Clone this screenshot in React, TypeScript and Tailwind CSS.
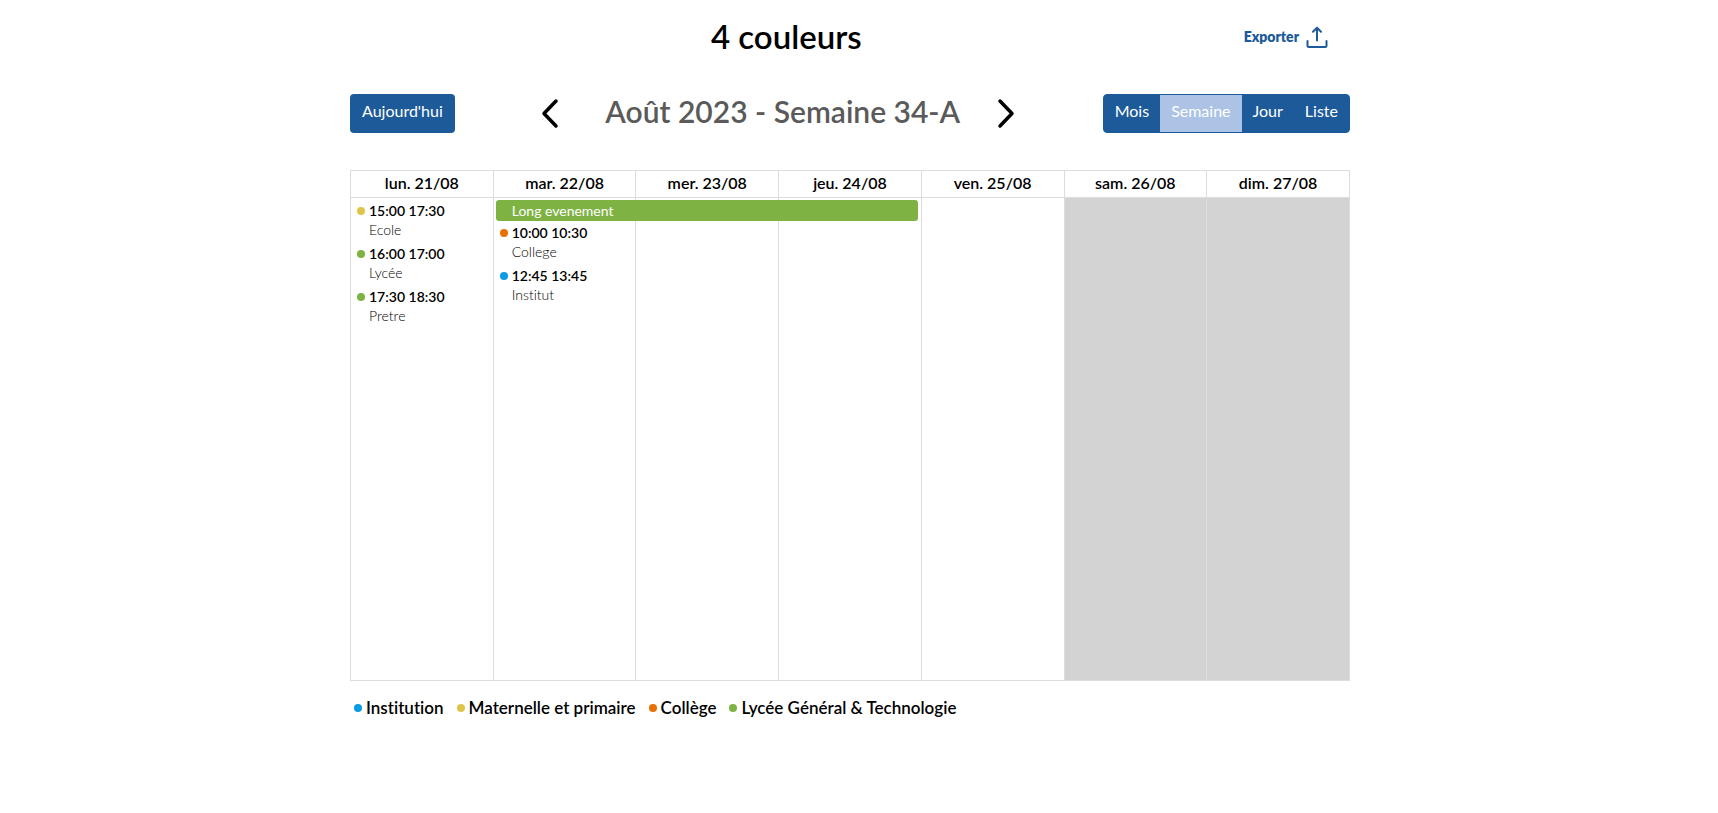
import clsx from "clsx";

type CalendarEvent = {
  start: string;
  end: string;
  title: string;
  color: string;
};

type Day = {
  label: string;
  weekend?: boolean;
  longEvent?: string;
  events: CalendarEvent[];
};

const colors = {
  institution: "bg-[#0a9be3]",
  primaire: "bg-[#e0c44a]",
  college: "bg-[#e87006]",
  lycee: "bg-[#7eb344]",
};

const days: Day[] = [
  {
    label: "lun. 21/08",
    events: [
      { start: "15:00", end: "17:30", title: "Ecole", color: colors.primaire },
      { start: "16:00", end: "17:00", title: "Lycée", color: colors.lycee },
      { start: "17:30", end: "18:30", title: "Pretre", color: colors.lycee },
    ],
  },
  {
    label: "mar. 22/08",
    longEvent: "Long evenement",
    events: [
      { start: "10:00", end: "10:30", title: "College", color: colors.college },
      { start: "12:45", end: "13:45", title: "Institut", color: colors.institution },
    ],
  },
  { label: "mer. 23/08", events: [] },
  { label: "jeu. 24/08", events: [] },
  { label: "ven. 25/08", events: [] },
  { label: "sam. 26/08", weekend: true, events: [] },
  { label: "dim. 27/08", weekend: true, events: [] },
];

const legend = [
  { label: "Institution", color: colors.institution },
  { label: "Maternelle et primaire", color: colors.primaire },
  { label: "Collège", color: colors.college },
  { label: "Lycée Général & Technologie", color: colors.lycee },
];

const views = ["Mois", "Semaine", "Jour", "Liste"];

const Dot = ({ color }: { color: string }) => (
  <span className={clsx("size-2 shrink-0 rounded-full", color)} />
);

const ExportIcon = () => (
  <svg className="size-6" viewBox="0 0 24 24" fill="none" stroke="currentColor" strokeWidth="2" strokeLinecap="round" strokeLinejoin="round">
    <path d="M2.5 16v4.5a1.5 1.5 0 0 0 1.5 1.5h16a1.5 1.5 0 0 0 1.5-1.5V16" />
    <path d="M12 15.5V3M8 6.8 12 2.8l4 4" />
  </svg>
);

const Chevron = ({ d }: { d: string }) => (
  <svg className="h-8 w-5" viewBox="0 0 20 32" fill="none" stroke="currentColor" strokeWidth="3.5" strokeLinecap="round" strokeLinejoin="round">
    <path d={d} />
  </svg>
);

const Toolbar = () => (
  <div className="flex items-center justify-between">
    <button type="button" className="h-[39px] rounded bg-[#1c5a9a] px-3 pb-1 text-base text-white">
      Aujourd'hui
    </button>

    <div className="flex items-center gap-9">
      <button type="button" aria-label="Semaine précédente">
        <Chevron d="M15 4 3 16.500l12 12.500" />
      </button>
      <h2 className="ml-2 pb-1 text-[30px] leading-9 font-semibold text-[#5a5a5a]">Août 2023 - Semaine 34-A</h2>
      <button type="button" aria-label="Semaine suivante">
        <Chevron d="M4 4l12 12.500L4 29" />
      </button>
    </div>

    <div className="flex h-[39px] overflow-hidden rounded border border-[#1c5a9a] bg-[#1c5a9a]">
      {views.map((view) => (
        <button
          key={view}
          type="button"
          className={clsx("px-[11px] pb-1 text-base text-white", view === "Semaine" && "bg-[#acc3e6]")}
        >
          {view}
        </button>
      ))}
    </div>
  </div>
);

const DayCell = ({ day }: { day: Day }) => (
  <td className={clsx("relative border border-[#dddddd] align-top", day.weekend && "bg-[#d3d3d3]")}>
    {/* runs over the next two days */}
    {day.longEvent && (
      <div className="absolute top-0.5 left-0.5 z-10 w-[calc(300%-3px)] rounded-[3px] bg-[#7eb344] pl-4 text-sm leading-[21px] text-white">
        {day.longEvent}
      </div>
    )}
    <ul className={clsx("flex flex-col gap-[5px] px-1.5", day.longEvent ? "pt-[25px]" : "pt-[3px]")}>
      {day.events.map((event) => (
        <li key={event.title} className="text-sm">
          <div className="flex items-center gap-1 leading-5 font-semibold">
            <Dot color={event.color} />
            {event.start} {event.end}
          </div>
          <div className="pl-3 leading-[18px] font-light">{event.title}</div>
        </li>
      ))}
    </ul>
  </td>
);

const App = () => {
  return (
    <main className="pr-[18px] font-['Lato',sans-serif] text-black [font-variant-ligatures:none]">
      <div className="mx-auto max-w-[1000px]">
        <header className="flex items-center pt-[15px]">
          <h1 className="flex-1 pb-0.5 text-center text-[33px] leading-[42px] font-semibold">4 couleurs</h1>
          <button type="button" className="flex items-center gap-1.5 px-[21px] text-sm font-extrabold text-[#1c5a9a]">
            Exporter
            <ExportIcon />
          </button>
        </header>

        <div className="pt-[34px]">
          <Toolbar />
        </div>

        <table className="mt-[37px] w-full table-fixed border-collapse">
          <thead>
            <tr>
              {days.map((day) => (
                <th key={day.label} className="border border-[#dddddd] pb-0.5 text-base leading-6 font-semibold">
                  {day.label}
                </th>
              ))}
            </tr>
          </thead>
          <tbody>
            <tr className="h-[483px]">
              {days.map((day) => (
                <DayCell key={day.label} day={day} />
              ))}
            </tr>
          </tbody>
        </table>

        <ul className="flex gap-[13px] px-1 pt-[15px] text-[17px] leading-6 font-semibold">
          {legend.map((item) => (
            <li key={item.label} className="flex items-center gap-1">
              <Dot color={item.color} />
              {item.label}
            </li>
          ))}
        </ul>
      </div>
    </main>
  );
};

export default App;
